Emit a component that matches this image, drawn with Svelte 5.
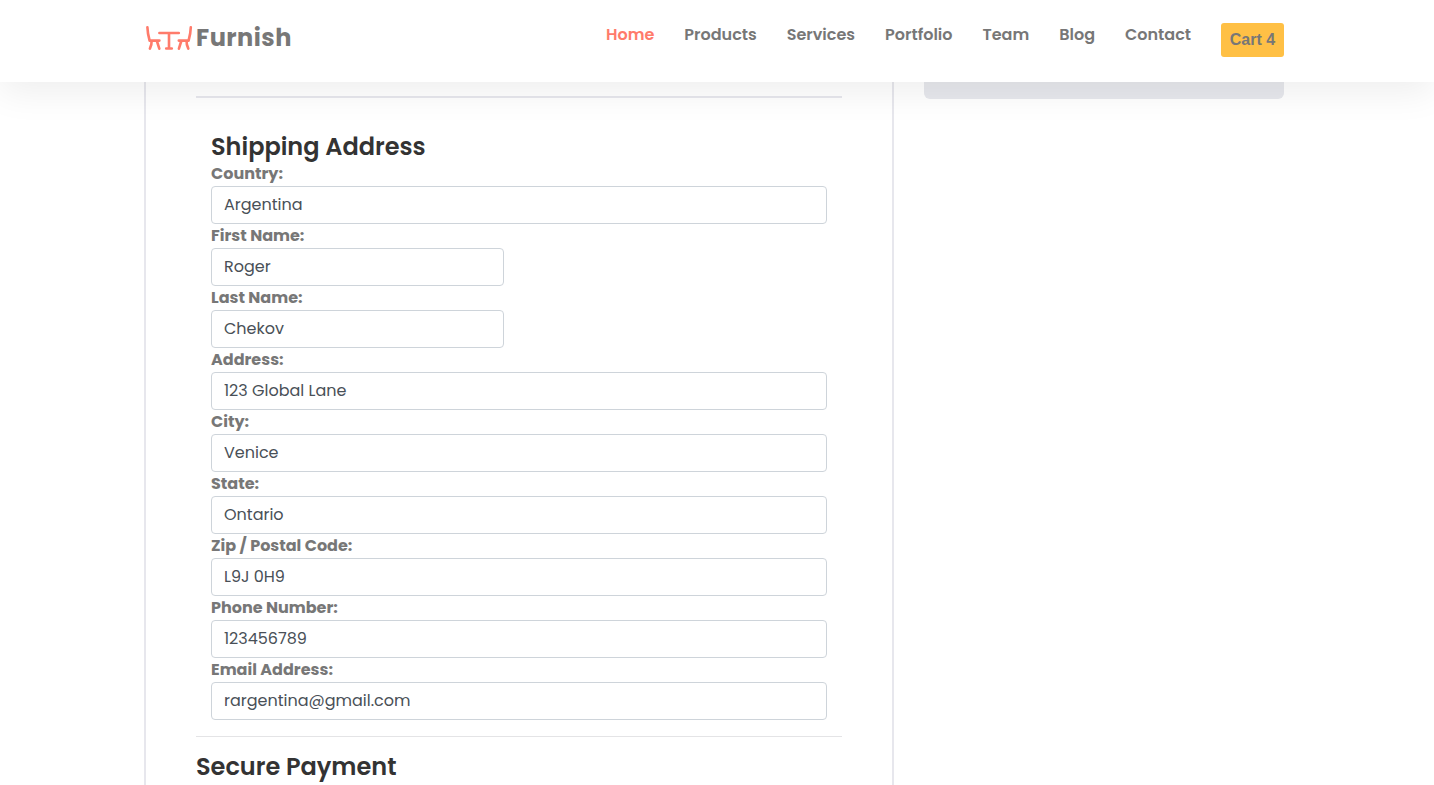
<script>
  const links = ['Home', 'Products', 'Services', 'Portfolio', 'Team', 'Blog', 'Contact'];

  const fields = [
    { label: 'Country:', value: 'Argentina' },
    { label: 'First Name:', value: 'Roger', half: true },
    { label: 'Last Name:', value: 'Chekov', half: true },
    { label: 'Address:', value: '123 Global Lane' },
    { label: 'City:', value: 'Venice' },
    { label: 'State:', value: 'Ontario' },
    { label: 'Zip / Postal Code:', value: 'L9J 0H9' },
    { label: 'Phone Number:', value: '123456789' },
    { label: 'Email Address:', value: 'rargentina@gmail.com' }
  ];
</script>

<header>
  <div class="container bar">
    <a class="brand" href="#home">
      <svg width="47" height="26" viewBox="0 0 47 26" fill="none" stroke="#ff7b6b" stroke-width="2.6" stroke-linecap="round" stroke-linejoin="round">
        <path d="M1.4 2.3C1.5 7 2.2 10.5 3.6 15.6H13.4M5.6 16C5.8 19 5 21.5 3.9 23.7M10.9 16L13.3 23.7" />
        <path d="M13.4 8H32.8M23 8.5V23.2M20.2 23.5H25.8" />
        <path d="M44.8 2.3C44.7 7 44 10.5 42.6 15.6H32.8M40.6 16C40.4 19 41.2 21.5 42.3 23.7M35.3 16L32.9 23.7" />
      </svg>
      <span>Furnish</span>
    </a>
    <nav>
      {#each links as link, i}
        <a href="#{link}" class:active={i === 0}>{link}</a>
      {/each}
      <button>Cart 4</button>
    </nav>
  </div>
</header>

<main class="container">
  <section class="card">
    <hr class="thick" />
    <div class="form">
      <h2>Shipping Address</h2>
      {#each fields as f}
        <label class:half={f.half}>
          <span>{f.label}</span>
          <input value={f.value} />
        </label>
      {/each}
    </div>
    <hr />
    <h2>Secure Payment</h2>
  </section>
  <aside></aside>
</main>

<style>
  :global(body) {
    overflow: hidden;
    background: #fff;
    font-family: Poppins, Inter, sans-serif;
    font-size: 16px;
    line-height: 24px;
    color: #777;
  }
  .container {
    width: 1140px;
    margin-left: 144px;
    display: flex;
  }
  header {
    position: relative;
    z-index: 2;
    height: 82px;
    background: #fff;
    box-shadow: 0 10px 36px rgba(0, 0, 0, 0.07);
  }
  .bar {
    justify-content: space-between;
    align-items: flex-start;
  }
  a {
    color: inherit;
    text-decoration: none;
    white-space: nowrap;
  }
  .brand {
    display: flex;
    padding: 25px 0 0 2px;
    font-size: 24px;
    line-height: 26px;
    font-weight: 700;
    letter-spacing: 0.5px;
  }
  .brand span {
    margin-left: 3px;
  }
  nav {
    display: flex;
    gap: 30px;
    padding-top: 23px;
    font-weight: 600;
  }
  .active {
    color: #ff7b6b;
  }
  button {
    box-sizing: border-box;
    width: 63px;
    height: 34px;
    padding: 0;
    border: 0;
    border-radius: 3px;
    background: #ffc045;
    color: #777;
    font: bold 16px/34px 'Liberation Sans', sans-serif;
  }
  main {
    gap: 30px;
    height: 703px;
  }
  .card {
    box-sizing: border-box;
    width: 750px;
    padding: 14px 50px 0;
    border: solid #e7e7ed;
    border-width: 0 2px;
  }
  hr {
    margin: 16px 0 15px;
    border: 0;
    border-top: 1px solid #e4e4e6;
  }
  .thick {
    margin: 0;
    border-top: 2px solid #e7e7ed;
  }
  h2 {
    margin: 0;
    font-size: 24px;
    line-height: 29px;
    font-weight: 600;
    color: #333;
    white-space: nowrap;
  }
  .form {
    padding: 34px 15px 0;
  }
  .form h2 {
    margin-bottom: 1px;
  }
  label {
    display: flex;
    flex-direction: column;
    align-items: stretch;
    height: 62px;
    font-weight: 700;
    white-space: nowrap;
  }
  label.half {
    width: 293px;
  }
  label span {
    height: 24px;
    line-height: 23px;
  }
  input {
    box-sizing: border-box;
    width: 100%;
    height: 38px;
    padding: 0 12px 1px;
    border: 1px solid #ced4da;
    border-radius: 4px;
    background: #fff;
    color: #495057;
    font: 400 16px/24px Poppins, Inter, sans-serif;
  }
  aside {
    width: 360px;
    height: 17px;
    border-radius: 0 0 6px 6px;
    background: #e7e8ed;
  }
</style>
